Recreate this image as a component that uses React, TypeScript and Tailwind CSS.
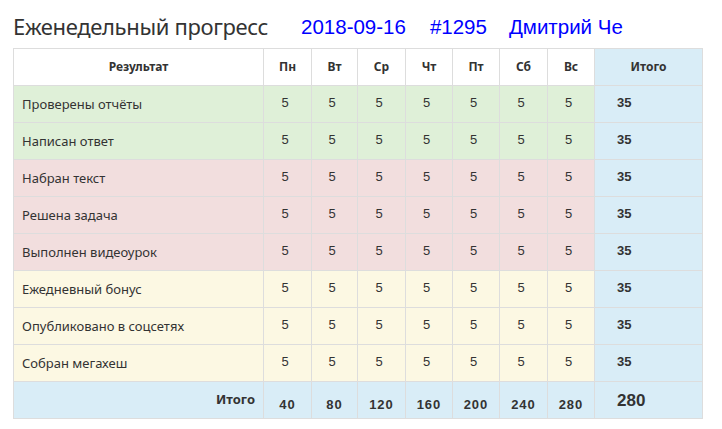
import React from "react";

type Row = { label: string; tone: "green" | "red" | "yellow" };

const rows: Row[] = [
  { label: "Проверены отчёты", tone: "green" },
  { label: "Написан ответ", tone: "green" },
  { label: "Набран текст", tone: "red" },
  { label: "Решена задача", tone: "red" },
  { label: "Выполнен видеоурок", tone: "red" },
  { label: "Ежедневный бонус", tone: "yellow" },
  { label: "Опубликовано в соцсетях", tone: "yellow" },
  { label: "Собран мегахеш", tone: "yellow" },
];

const days = ["Пн", "Вт", "Ср", "Чт", "Пт", "Сб", "Вс"];
const totals = ["40", "80", "120", "160", "200", "240", "280"];
const widths = [250, 48, 46, 48, 47, 47, 48, 47, 108];

const toneBg = {
  green: "bg-[#dff0d8]",
  red: "bg-[#f2dede]",
  yellow: "bg-[#fcf8e3]",
};

const sans = "font-['Noto_Sans',sans-serif]";
const arial = "font-['Liberation_Sans',Arial,sans-serif]";

export default function App() {
  return (
    <div className="w-[722px] h-[429px] bg-white text-[#333] overflow-hidden">
      <div className="flex items-end h-[48px] pl-[13px] pb-[11px]">
        <span className={`${sans} text-[22px] leading-none tracking-[-0.35px]`}>Еженедельный прогресс</span>
        <span className={`${arial} text-[20.5px] leading-none text-[#0000ff] ml-[33px]`}>2018-09-16</span>
        <span className={`${arial} text-[20.5px] leading-none text-[#0000ff] ml-[24px]`}>#1295</span>
        <span className={`${arial} text-[20.5px] leading-none text-[#0000ff] ml-[22px]`}>Дмитрий Че</span>
      </div>
      <table className="ml-[13px] border-collapse table-fixed w-[689px]">
        <colgroup>
          {widths.map((w, i) => (
            <col key={i} style={{ width: w }} />
          ))}
        </colgroup>
        <thead>
          <tr className="h-[37px]">
            <th className={`${sans} border border-[#ddd] text-[12px] font-bold text-center`}>Результат</th>
            {days.map((d) => (
              <th key={d} className={`${sans} border border-[#ddd] text-[12px] font-bold text-center`}>{d}</th>
            ))}
            <th className={`${sans} border border-[#ddd] bg-[#d9edf7] text-[12px] font-bold text-center`}>Итого</th>
          </tr>
        </thead>
        <tbody>
          {rows.map((r) => (
            <tr key={r.label} className={`h-[37px] ${toneBg[r.tone]}`}>
              <td className={`${sans} border border-[#ddd] text-[13px] pl-[8px] pt-[1px]`}>{r.label}</td>
              {days.map((d) => (
                <td key={d} className={`${arial} border border-[#ddd] text-[13px] text-center pr-[5px] pb-[3px]`}>5</td>
              ))}
              <td className={`${arial} border border-[#ddd] bg-[#d9edf7] text-[13px] font-bold pl-[22px] pb-[3px]`}>35</td>
            </tr>
          ))}
          <tr className="h-[37px] bg-[#d9edf7]">
            <td className={`${sans} border border-[#ddd] text-[13px] font-bold text-right pr-[8px] pb-[1px]`}>Итого</td>
            {totals.map((t, i) => (
              <td key={i} className={`${arial} border border-[#ddd] text-[13px] font-bold text-center tracking-[1px] pt-[10px]`}>{t}</td>
            ))}
            <td className={`${arial} border border-[#ddd] text-[17px] font-bold pl-[22px] pt-[1px]`}>280</td>
          </tr>
        </tbody>
      </table>
    </div>
  );
}
